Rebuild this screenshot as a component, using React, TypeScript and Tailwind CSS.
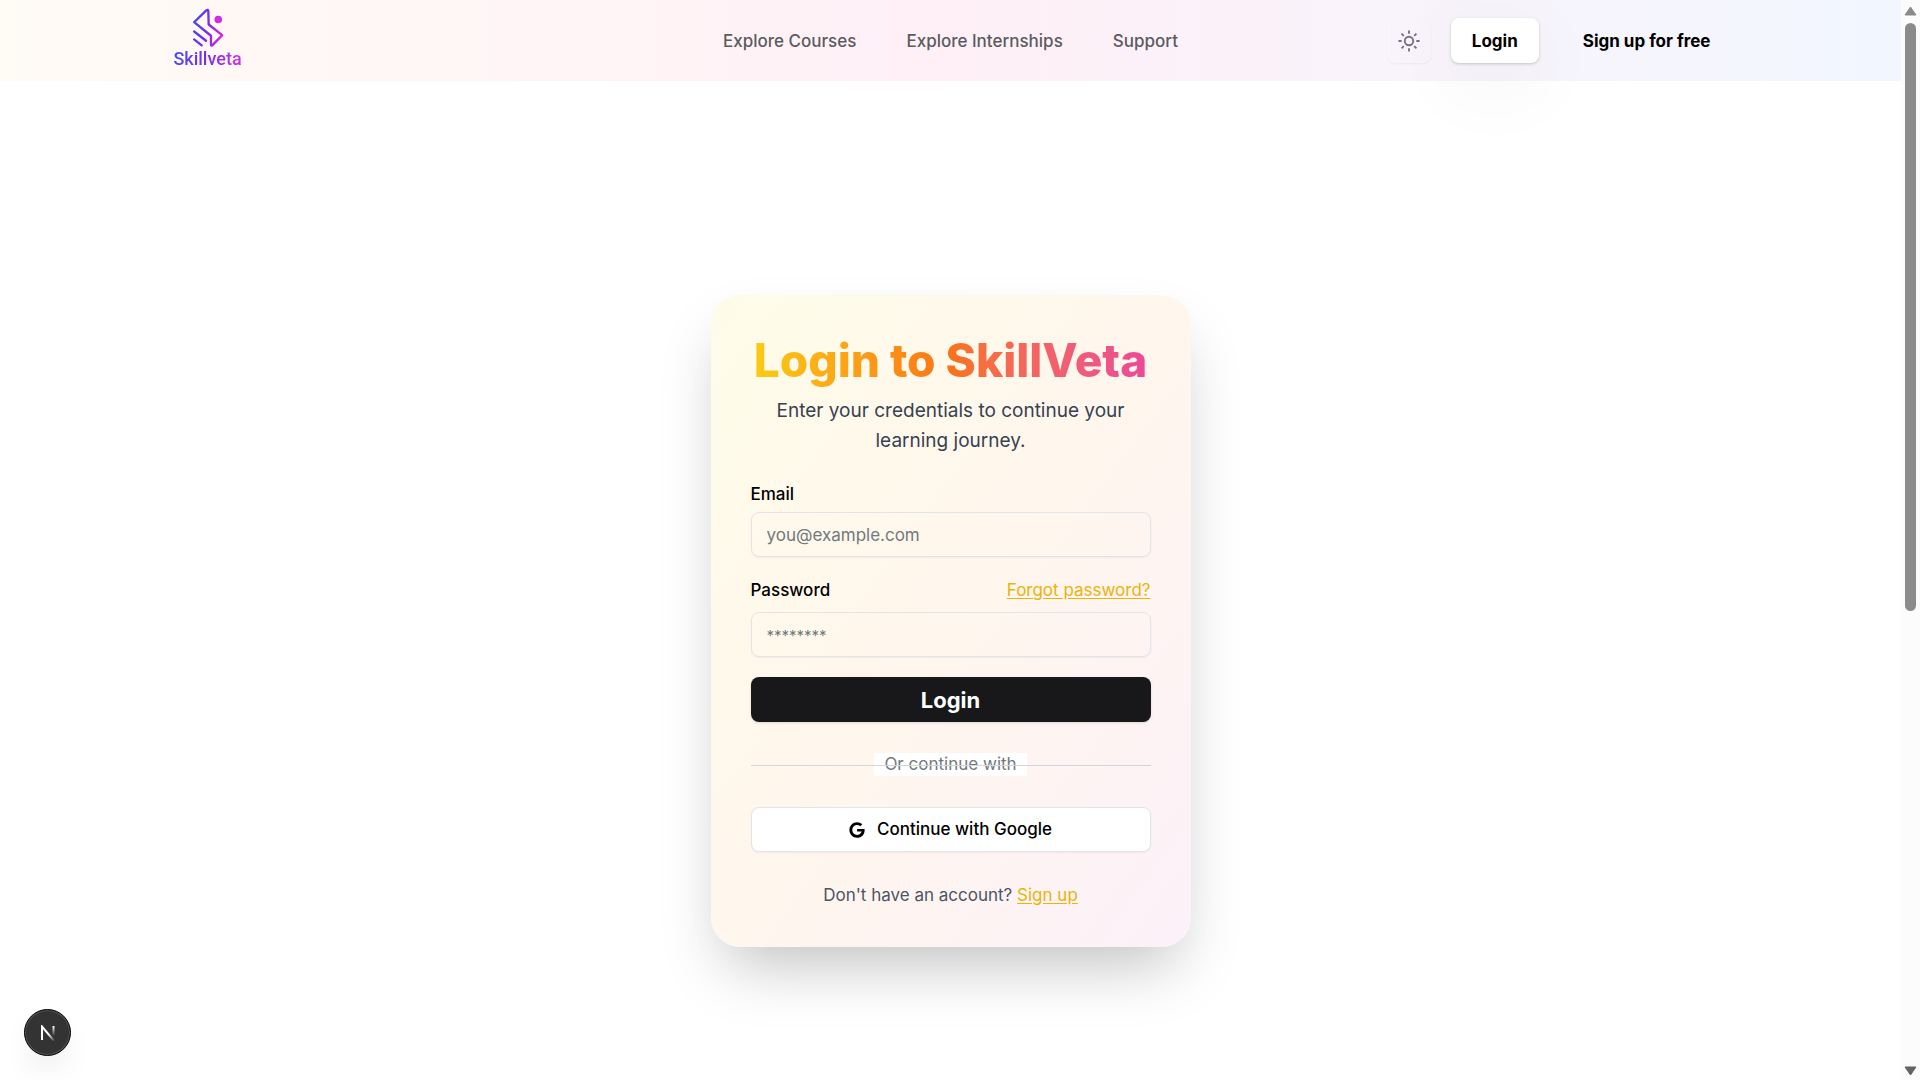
import { FaGoogle } from "react-icons/fa";

function LogoMark() {
  return (
    <svg viewBox="92 20 96 124" className="h-[41px] w-8" fill="none" aria-hidden="true">
      <defs>
        <linearGradient id="mark" x1="92" y1="70" x2="188" y2="90" gradientUnits="userSpaceOnUse">
          <stop stopColor="#3b4bf5" />
          <stop offset="0.5" stopColor="#7a2be8" />
          <stop offset="1" stopColor="#d42be0" />
        </linearGradient>
      </defs>
      <g stroke="url(#mark)" strokeWidth="7" strokeLinecap="round" strokeLinejoin="round">
        <path d="M98 66 L134 31 Q141 25 141 34 L142 73 L183 105 L153 136 Q149 139 149 133 L149 107 Z" />
        <path d="M98 94 L134 122" />
        <path d="M98 118 L121 136" />
      </g>
      <circle cx="171" cy="58" r="11.500" fill="#cf2ee0" />
    </svg>
  );
}

function SunIcon() {
  return (
    <svg viewBox="0 0 24 24" className="size-[22px]" fill="none" stroke="#71717a" strokeWidth="2" aria-hidden="true">
      <circle cx="12" cy="12" r="4.600" />
      <path d="M12 .5v3.500M12 20v3.500M.5 12H4M20 12h3.500M3.900 3.900l2.400 2.400M17.700 17.700l2.400 2.400M3.900 20.100l2.400-2.400M17.700 6.300l2.400-2.400" />
    </svg>
  );
}

function Header() {
  return (
    <header className="h-[81px] shrink-0 bg-linear-to-r from-[#fffbf5] via-[#fff0f7] to-[#f2f7ff]">
      <div className="mx-auto grid h-full max-w-[1600px] grid-cols-[1fr_auto_1fr] items-center">
        <a href="#home" className="ml-5 flex w-[74px] flex-col items-center pb-1">
          <LogoMark />
          <span className="bg-linear-to-r from-[#3b4bf5] via-[#7a2be8] to-[#d42be0] bg-clip-text font-['Roboto'] text-[18px] leading-[22px] font-medium text-transparent">
            Skillveta
          </span>
        </a>
        <nav className="flex gap-[50px] pt-0.5 text-[17px] font-medium text-[#5b5b60]">
          <a href="#courses">Explore Courses</a>
          <a href="#internships">Explore Internships</a>
          <a href="#support">Support</a>
        </nav>
        <div className="flex items-center justify-end">
          <button type="button" aria-label="Toggle theme" className="mr-5 flex h-[45px] w-11 items-center justify-center rounded-lg shadow-xs">
            <SunIcon />
          </button>
          <button
            type="button"
            className="h-[45px] rounded-lg bg-white px-[21px] pt-0.5 text-[17px] font-bold text-black shadow-[0_1px_3px_rgba(0,0,0,0.2),0_20px_80px_rgba(0,0,0,0.06)]"
          >
            Login
          </button>
          <button type="button" className="ml-1 h-[45px] rounded-lg px-10 pt-0.5 text-[17px] font-bold text-black">
            Sign up for free
          </button>
        </div>
      </div>
    </header>
  );
}

function LoginCard() {
  return (
    <section className="w-[480px] rounded-[30px] bg-linear-to-br from-[#fefce8] via-[#fff6ed] to-[#fcf1f9] p-10 shadow-[0_31px_62px_-15px_rgba(0,0,0,0.25)]">
      <h1 className="bg-linear-to-r from-[#facc15] via-[#f97316] to-[#ec4899] bg-clip-text pb-2 text-center text-[46px] leading-[50px] font-extrabold whitespace-nowrap text-transparent">
        Login to SkillVeta
      </h1>
      <p className="mt-[3px] text-center text-[19px] leading-[30px] text-[#374151]">
        Enter your credentials to continue your learning journey.
      </p>
      <form className="mt-[26px] text-[17px] leading-6" onSubmit={(e) => e.preventDefault()}>
        <label htmlFor="email" className="block font-medium text-black">
          Email
        </label>
        <input
          id="email"
          type="email"
          placeholder="you@example.com"
          className="mt-1.5 block h-[45px] w-full rounded-lg border border-[#e2e4e9] bg-transparent px-[15px] shadow-xs placeholder:text-[#737880]"
        />
        <div className="mt-[21px] flex justify-between">
          <label htmlFor="password" className="font-medium text-black">
            Password
          </label>
          <a href="#forgot" className="text-[#eab308] underline underline-offset-2">
            Forgot password?
          </a>
        </div>
        <input
          id="password"
          type="password"
          placeholder="********"
          className="mt-2.5 block h-[45px] w-full rounded-lg border border-[#e2e4e9] bg-transparent px-[15px] shadow-xs placeholder:text-[15px] placeholder:text-[#737880]"
        />
        <button type="submit" className="mt-5 h-[45px] w-full rounded-lg bg-[#18181b] text-[22px] font-bold text-white shadow-sm">
          Login
        </button>
      </form>
      <div className="relative my-[31px] flex justify-center">
        <span className="bg-white px-2.5 text-[17px] leading-[23px] text-[#737880]">Or continue with</span>
        <span className="absolute inset-x-0 top-3 border-t border-gray-300" />
      </div>
      <button
        type="button"
        className="flex h-[45px] w-full items-center justify-center gap-3 rounded-lg border border-[#e2e4e9] bg-white text-[17px] font-medium text-black shadow-xs"
      >
        <FaGoogle className="size-4" />
        Continue with Google
      </button>
      <p className="mt-[31px] text-center text-[17px] leading-6 text-[#4b5563]">
        Don't have an account?{" "}
        <a href="#signup" className="text-[#eab308] underline underline-offset-2">
          Sign up
        </a>
      </p>
    </section>
  );
}

function ScrollRail() {
  return (
    <div className="flex w-[19px] shrink-0 flex-col items-center bg-[#fcfcfc] pt-1.5 pb-1" aria-hidden="true">
      <svg viewBox="0 0 13 10" className="h-2.5 w-[13px] shrink-0">
        <path d="M6.500 1 L12 9 H1 Z" fill="#8b8b8b" stroke="#8b8b8b" strokeLinejoin="round" />
      </svg>
      <div className="mt-[7px] h-[588px] w-[11px] rounded-full bg-[#8b8b8b]" />
      <svg viewBox="0 0 13 10" className="mt-auto h-2.5 w-[13px] shrink-0">
        <path d="M6.500 9 L12 1 H1 Z" fill="#636363" stroke="#636363" strokeLinejoin="round" />
      </svg>
    </div>
  );
}

function DevBadge() {
  return (
    <button
      type="button"
      aria-label="Open developer tools"
      className="fixed bottom-6 left-6 flex size-[47px] items-center justify-center rounded-full border border-black bg-[#333] shadow-[inset_0_0_0_1px_rgba(255,255,255,0.16),0_16px_32px_-8px_rgba(0,0,0,0.12)]"
    >
      <svg viewBox="0 0 16 16" className="size-4" fill="none" aria-hidden="true">
        <defs>
          <linearGradient id="diag" x1="9" y1="9" x2="15" y2="16" gradientUnits="userSpaceOnUse">
            <stop stopColor="#fff" />
            <stop offset="1" stopColor="#fff" stopOpacity="0" />
          </linearGradient>
          <linearGradient id="stem" x1="13" y1="1" x2="13" y2="11" gradientUnits="userSpaceOnUse">
            <stop stopColor="#fff" />
            <stop offset="1" stopColor="#fff" stopOpacity="0" />
          </linearGradient>
        </defs>
        <path d="M2 15V1.500L15 17" stroke="url(#diag)" strokeWidth="2" />
        <path d="M13.500 1V11" stroke="url(#stem)" strokeWidth="2" />
      </svg>
    </button>
  );
}

export default function App() {
  return (
    <div className="flex h-screen overflow-hidden bg-white font-['Inter',sans-serif]">
      <div className="flex min-w-0 flex-1 flex-col overflow-hidden">
        <Header />
        <main className="flex min-h-screen shrink-0 items-center justify-center">
          <LoginCard />
        </main>
      </div>
      <ScrollRail />
      <DevBadge />
    </div>
  );
}
